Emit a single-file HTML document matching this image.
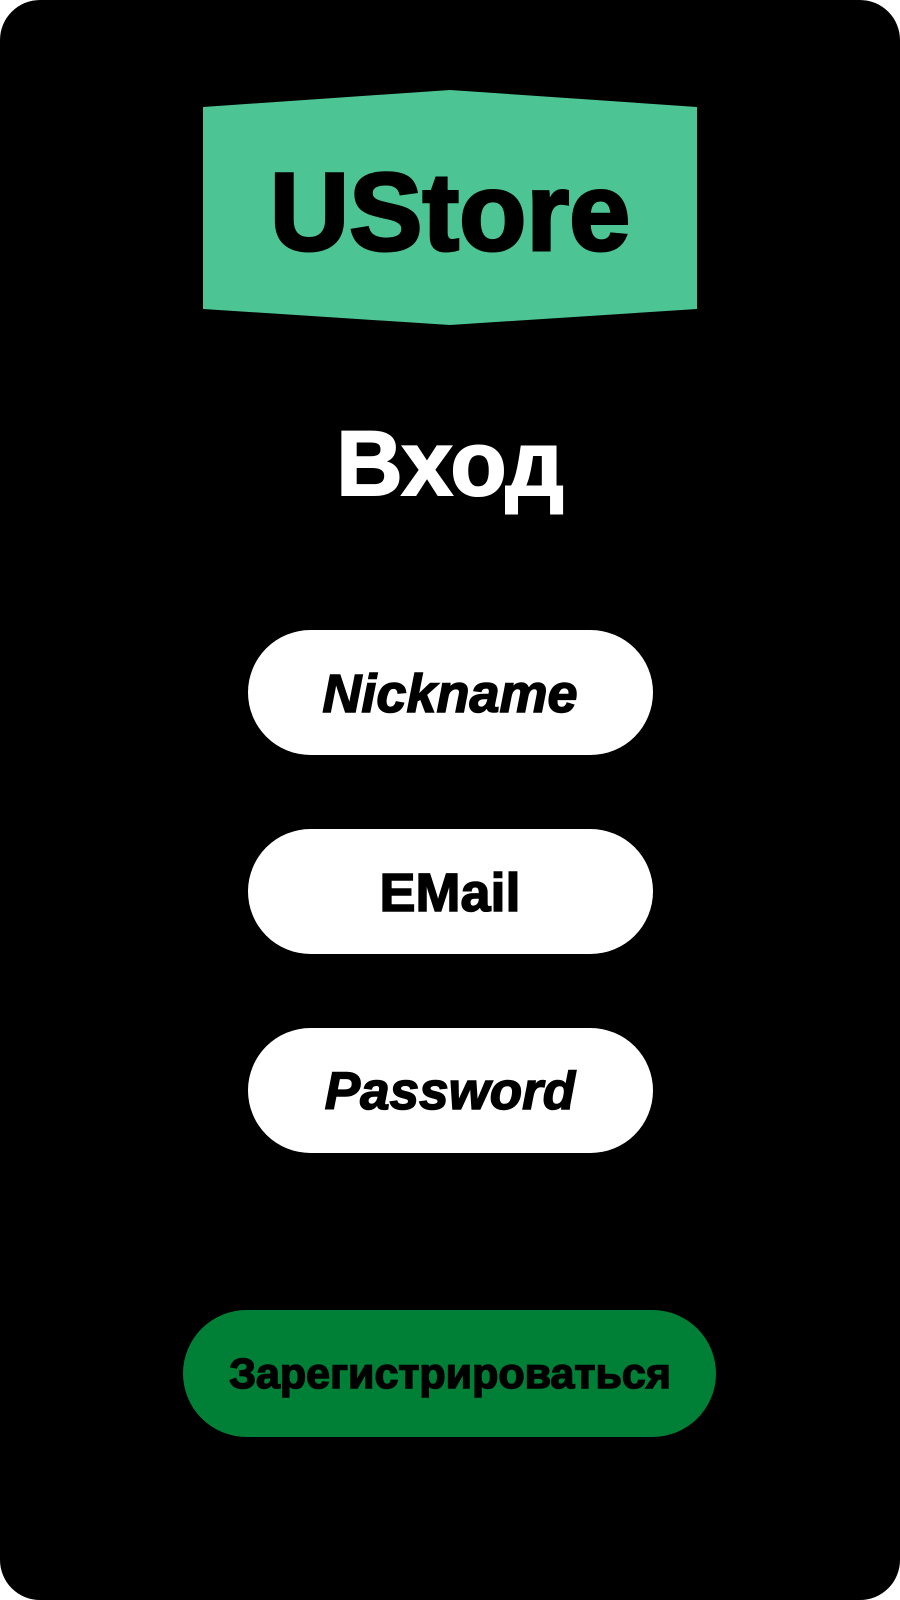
<!DOCTYPE html>
<html><head><meta charset="utf-8"><style>
html,body{margin:0;padding:0;background:#fff;}
.page{position:relative;width:900px;height:1600px;background:#000;border-radius:40px;overflow:hidden;font-family:"Liberation Sans",sans-serif;font-weight:bold;}
.t{position:absolute;left:0;width:900px;text-align:center;white-space:nowrap;}
.inp{position:absolute;left:248px;width:405px;height:125px;border-radius:63px;background:#fff;}
</style></head><body>
<div class="page">
<svg style="position:absolute;left:0;top:0" width="900" height="400"><polygon points="203,107 450,90 697,107 697,309 450,325 203,309" fill="#4dc493"/></svg>
<div class="t" style="top:153px;font-size:110px;line-height:120px;color:#000;-webkit-text-stroke:3px #000;">UStore</div>
<div class="t" style="top:414px;font-size:92px;line-height:100px;color:#fff;-webkit-text-stroke:2px #fff;">Вход</div>
<div class="inp" style="top:630px"></div>
<div class="t" style="top:661px;font-size:54px;line-height:66px;font-style:italic;-webkit-text-stroke:1.5px #000;">Nickname</div>
<div class="inp" style="top:829px"></div>
<div class="t" style="top:860px;font-size:54px;line-height:66px;-webkit-text-stroke:1.5px #000;">EMail</div>
<div class="inp" style="top:1028px"></div>
<div class="t" style="top:1059px;font-size:53px;line-height:66px;font-style:italic;-webkit-text-stroke:1.5px #000;">Password</div>
<div style="position:absolute;left:183px;top:1310px;width:533px;height:127px;border-radius:64px;background:#008037;"></div>
<div class="t" style="top:1349px;font-size:43px;line-height:50px;color:#000;-webkit-text-stroke:1.5px #000;">Зарегистрироваться</div>
</div>
</body></html>
